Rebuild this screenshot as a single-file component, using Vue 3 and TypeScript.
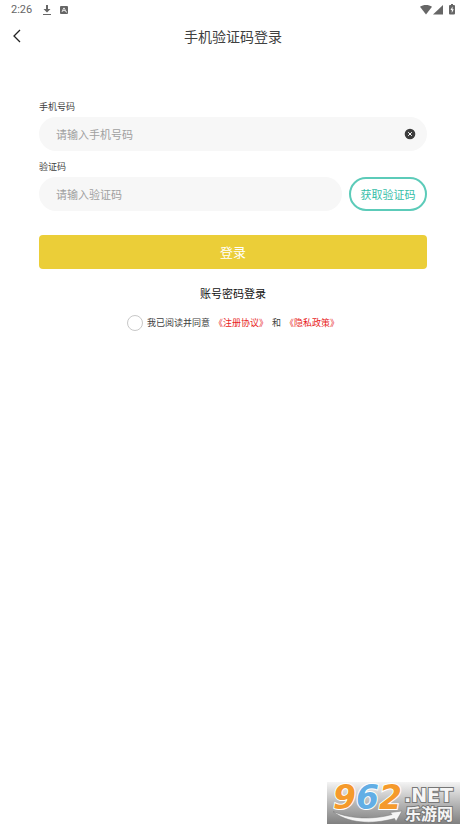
<script setup lang="ts">
import { ref } from 'vue'

const phone = ref<string>('')
const code = ref<string>('')
const agreed = ref<boolean>(false)
</script>

<template>
  <div class="page">
    <div class="status">
      <span class="time">2:26</span>
      <svg class="download" viewBox="0 0 10 12" aria-hidden="true">
        <path d="M4 1h2v4h2.500L5 8.500 1.500 5H4zM1 10h8v1H1z" fill="#666" />
      </svg>
      <svg class="badge" viewBox="0 0 8 8" aria-hidden="true">
        <rect width="8" height="8" rx="1" fill="#666" />
        <path d="M2 6l1.700-4h.6L6 6M2.800 4.600h2.400M6 6h1" fill="none" stroke="#fff" stroke-width=".8" />
      </svg>
      <svg class="signals" viewBox="0 0 36 12" aria-hidden="true">
        <path d="M0 2.800C3.400.3 8.600.3 12 2.800L6 10.500z" fill="#666" />
        <path d="M23 1v9.500H13z" fill="#666" />
        <path d="M31 1V0h2v1h1q1 0 1 1v7.500q0 1-1 1h-4q-1 0-1-1V2q0-1 1-1z" fill="#666" />
        <path d="M32.500 2.500L30.500 6h1.300v3l2-3.800h-1.300z" fill="#fff" />
      </svg>
    </div>

    <header class="header">
      <button class="back" type="button" aria-label="返回">
        <svg viewBox="0 0 8 14" aria-hidden="true">
          <path d="M7 1L1 7l6 6" fill="none" stroke="#222" stroke-width="1.300" />
        </svg>
      </button>
      <h1 class="title">手机验证码登录</h1>
    </header>

    <form class="form" @submit.prevent>
      <label class="label" for="phone">手机号码</label>
      <div class="field">
        <input id="phone" v-model="phone" class="input" type="tel" placeholder="请输入手机号码" />
        <button class="clear" type="button" aria-label="清除" @click="phone = ''">
          <svg viewBox="0 0 12 12" aria-hidden="true">
            <circle cx="6" cy="6" r="5.300" fill="#3d3d3d" />
            <path d="M4.200 4.200l3.600 3.600M7.800 4.200L4.200 7.800" stroke="#fff" stroke-width="1" />
          </svg>
        </button>
      </div>

      <label class="label second" for="code">验证码</label>
      <div class="row">
        <div class="field">
          <input id="code" v-model="code" class="input" type="text" placeholder="请输入验证码" />
        </div>
        <button class="send" type="button">获取验证码</button>
      </div>

      <button class="submit" type="submit">登录</button>
      <a class="switch" href="#">账号密码登录</a>

      <div class="terms">
        <input id="agree" v-model="agreed" class="check" type="checkbox" />
        <label for="agree">我已阅读并同意</label>
        <a href="#">《注册协议》</a>
        <span>和</span>
        <a href="#">《隐私政策》</a>
      </div>
    </form>

    <svg class="watermark" viewBox="0 0 133 42" role="img" aria-label="962.NET 乐游网">
      <defs>
        <linearGradient id="shade" x1="0" y1="0" x2="0" y2="1">
          <stop offset="0" stop-color="#f4f4f4" />
          <stop offset=".5" stop-color="#b8b8b8" />
          <stop offset="1" stop-color="#808080" />
        </linearGradient>
      </defs>
      <rect width="133" height="42" fill="url(#shade)" />
      <path d="M6 29.500C22 37 46 38 65 32.500L63 30.500 75 29 69 39.500 67.500 36.500C44 43 20 41 6 29.500z" fill="#f5f5f5" stroke="#777" stroke-width=".5" />
      <text class="digits" x="6" y="27"><tspan class="orange">9</tspan><tspan class="blue">6</tspan><tspan class="orange">2</tspan></text>
      <text class="net" x="77" y="20">.NET</text>
      <text class="name" x="78" y="38">乐游网</text>
    </svg>
  </div>
</template>

<style>
body {
  margin: 0;
  background: #fff;
}
</style>

<style scoped>
.page {
  position: relative;
  min-height: 100vh;
  font-family: "Noto Sans CJK SC", sans-serif;
  color: #404040;
}
button,
input {
  margin: 0;
  padding: 0;
  border: 0;
  background: none;
  font-family: inherit;
}
button {
  cursor: pointer;
}
a {
  text-decoration: none;
}
svg {
  display: block;
}
.status {
  display: flex;
  align-items: center;
  height: 19px;
  padding: 0 10px 0 11px;
}
.time {
  font: 11px/19px Roboto, sans-serif;
  color: #666;
}
.download {
  width: 10px;
  height: 12px;
  margin-left: 10px;
}
.badge {
  width: 8px;
  height: 8px;
  margin-left: 8px;
}
.signals {
  width: 36px;
  height: 12px;
  margin-left: auto;
}
.header {
  display: grid;
  grid-template-columns: 34px 1fr 34px;
  align-items: center;
  height: 34px;
}
.back {
  display: flex;
  justify-content: center;
}
.back svg {
  width: 8px;
  height: 14px;
}
.title {
  margin: 0;
  font-size: 14px;
  line-height: 20px;
  font-weight: 400;
  text-align: center;
}
.form {
  display: flex;
  flex-direction: column;
  padding: 47px 39px 0;
}
.label {
  font-size: 9px;
  line-height: 14px;
  margin-bottom: 3px;
}
.second {
  margin-top: 9px;
}
.field {
  display: flex;
  flex: 1 1 auto;
  align-items: center;
  box-sizing: border-box;
  height: 34px;
  padding: 0 11px 0 17px;
  border-radius: 17px;
  background: #f7f7f7;
}
.input {
  flex: 1;
  min-width: 0;
  height: 34px;
  font-size: 11px;
  outline: none;
}
.input::placeholder {
  color: #a0a0a0;
  opacity: 1;
}
.clear svg {
  width: 12px;
  height: 12px;
}
.row {
  display: flex;
  gap: 7px;
}
.send {
  box-sizing: border-box;
  width: 78px;
  height: 34px;
  border: 2px solid #5ccbb9;
  border-radius: 17px;
  font-size: 11px;
  color: #35bea8;
}
.submit {
  height: 34px;
  margin-top: 24px;
  border-radius: 4px;
  background: #ebce38;
  font-size: 13px;
  line-height: 32px;
  color: #fff;
}
.switch {
  align-self: center;
  margin-top: 16px;
  font-size: 11px;
  line-height: 16px;
  color: #111;
}
.terms {
  display: flex;
  align-items: center;
  justify-content: center;
  gap: 4px;
  margin-top: 14px;
  font-size: 9px;
  line-height: 16px;
}
.terms a {
  color: #e81e25;
}
.check {
  appearance: none;
  box-sizing: border-box;
  width: 16px;
  height: 16px;
  border: 1px solid #c8c8c8;
  border-radius: 50%;
}
.check:checked {
  background: #ebce38;
}
.watermark {
  position: absolute;
  right: 6px;
  bottom: 6px;
  width: 133px;
  height: 42px;
  overflow: visible;
}
.digits {
  font: italic bold 33px "DejaVu Sans", sans-serif;
  stroke: #fff;
  stroke-width: 2px;
  paint-order: stroke;
}
.orange {
  fill: #f59a2c;
}
.blue {
  fill: #62aee5;
}
.net {
  font: bold 19px "DejaVu Sans", sans-serif;
  fill: #f5f5f5;
  stroke: #777;
  stroke-width: 2px;
  paint-order: stroke;
}
.name {
  font: bold 16px "Noto Sans CJK SC", sans-serif;
  fill: #f5f5f5;
  stroke: #777;
  stroke-width: 2px;
  paint-order: stroke;
}
</style>
